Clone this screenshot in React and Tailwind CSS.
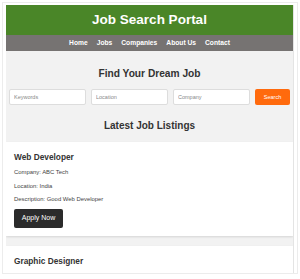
import React from "react";

const jobs = [
  {
    title: "Web Developer",
    company: "ABC Tech",
    location: "India",
    description: "Good Web Developer",
  },
  { title: "Graphic Designer" },
];

const links = ["Home", "Jobs", "Companies", "About Us", "Contact"];

const App = () => {
  return (
    <div className="w-[300px] h-[279px] bg-white p-[2px] overflow-hidden font-['Liberation_Sans',Arial,sans-serif]">
      <div className="h-[272px] w-[296px] border border-[#ececec] pt-[2px] pl-[3px] overflow-hidden">
        <div className="w-[288px] h-[268px] overflow-hidden border-r border-[#e4e4e4] bg-[#f2f2f2]">
          {/* header */}
          <div className="h-[30px] bg-[#4a8628] flex items-center justify-center">
            <h1 className="text-white font-bold text-[13.5px]">Job Search Portal</h1>
          </div>
          <nav className="h-[16px] bg-[#767372] flex items-center justify-center gap-[9px]">
            {links.map((l) => (
              <a key={l} className="text-white font-bold text-[6.7px]">
                {l}
              </a>
            ))}
          </nav>

          {/* search */}
          <div className="pt-[17px] px-[3px]">
            <h2 className="text-center font-bold text-[10.2px] leading-[12px] text-[#333]">
              Find Your Dream Job
            </h2>
            <div className="mt-[9px] flex gap-[5px]">
              <input
                placeholder="Keywords"
                className="w-[77px] h-[16px] bg-white border border-[#ddd] rounded-[2px] px-[4px] text-[5.5px] placeholder-[#888] outline-none"
              />
              <input
                placeholder="Location"
                className="w-[77px] h-[16px] bg-white border border-[#ddd] rounded-[2px] px-[4px] text-[5.5px] placeholder-[#888] outline-none"
              />
              <input
                placeholder="Company"
                className="w-[77px] h-[16px] bg-white border border-[#ddd] rounded-[2px] px-[4px] text-[5.5px] placeholder-[#888] outline-none"
              />
              <button className="w-[35px] h-[16px] bg-[#ff6a0d] rounded-[2px] text-white text-[5.5px]">
                Search
              </button>
            </div>
          </div>

          {/* listings */}
          <h2 className="mt-[15px] text-center font-bold text-[10px] leading-[12px] text-[#333]">
            Latest Job Listings
          </h2>
          <div className="mt-[10px] flex flex-col gap-[10px]">
            {jobs.map((j) => (
              <div key={j.title} className="bg-white shadow-[0_1px_2px_rgba(0,0,0,0.12)] pt-[10px] pb-[8px] px-[8px]">
                <h3 className="font-bold text-[8.3px] leading-[10px] text-[#333]">{j.title}</h3>
                {j.company && (
                  <>
                    <p className="mt-[6px] text-[5.9px] leading-[8px] text-[#444]">Company: {j.company}</p>
                    <p className="mt-[5.5px] text-[5.9px] leading-[8px] text-[#444]">Location: {j.location}</p>
                    <p className="mt-[5.5px] text-[5.9px] leading-[8px] text-[#444]">Description: {j.description}</p>
                    <button className="mt-[6px] w-[49px] h-[19px] bg-[#2b2b2b] rounded-[2px] text-white text-[7px]">
                      Apply Now
                    </button>
                  </>
                )}
              </div>
            ))}
          </div>
        </div>
      </div>
    </div>
  );
};

export default App;
